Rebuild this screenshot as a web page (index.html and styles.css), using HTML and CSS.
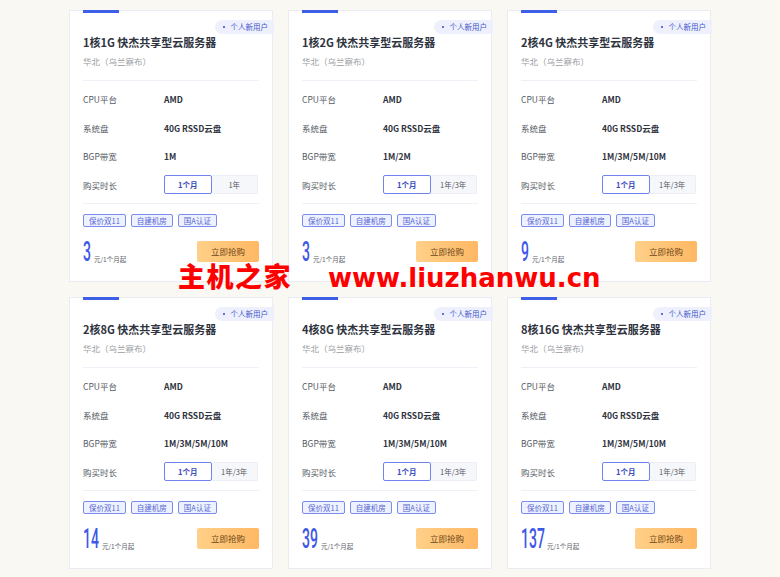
FILE: index.html
```html
<!DOCTYPE html>
<html lang="zh-CN">
<head>
<meta charset="utf-8">
<title>快杰共享型云服务器</title>
<link rel="stylesheet" href="styles.css">
</head>
<body>
<div class="grid">

  <div class="card">
    <div class="bar"></div>
    <span class="badge"><i class="dot"></i>个人新用户</span>
    <h3 class="title">1核1G 快杰共享型云服务器</h3>
    <p class="region">华北（乌兰察布）</p>
    <div class="line"></div>
    <div class="specs">
      <div class="row"><span class="lbl">CPU平台</span><span class="val">AMD</span></div>
      <div class="row"><span class="lbl">系统盘</span><span class="val">40G RSSD云盘</span></div>
      <div class="row"><span class="lbl">BGP带宽</span><span class="val">1M</span></div>
      <div class="row"><span class="lbl">购买时长</span><div class="seg"><span class="opt on">1个月</span><span class="opt">1年</span></div></div>
    </div>
    <div class="line line2"></div>
    <div class="tags"><span class="tag">保价双11</span><span class="tag">自建机房</span><span class="tag">国A认证</span></div>
    <div class="buy">
      <div class="price"><span class="num d1"><span class="digits">3</span></span><span class="unit">元/1个月起</span></div>
      <button class="btn">立即抢购</button>
    </div>
  </div>

  <div class="card">
    <div class="bar"></div>
    <span class="badge"><i class="dot"></i>个人新用户</span>
    <h3 class="title">1核2G 快杰共享型云服务器</h3>
    <p class="region">华北（乌兰察布）</p>
    <div class="line"></div>
    <div class="specs">
      <div class="row"><span class="lbl">CPU平台</span><span class="val">AMD</span></div>
      <div class="row"><span class="lbl">系统盘</span><span class="val">40G RSSD云盘</span></div>
      <div class="row"><span class="lbl">BGP带宽</span><span class="val">1M/2M</span></div>
      <div class="row"><span class="lbl">购买时长</span><div class="seg"><span class="opt on">1个月</span><span class="opt">1年/3年</span></div></div>
    </div>
    <div class="line line2"></div>
    <div class="tags"><span class="tag">保价双11</span><span class="tag">自建机房</span><span class="tag">国A认证</span></div>
    <div class="buy">
      <div class="price"><span class="num d1"><span class="digits">3</span></span><span class="unit">元/1个月起</span></div>
      <button class="btn">立即抢购</button>
    </div>
  </div>

  <div class="card">
    <div class="bar"></div>
    <span class="badge"><i class="dot"></i>个人新用户</span>
    <h3 class="title">2核4G 快杰共享型云服务器</h3>
    <p class="region">华北（乌兰察布）</p>
    <div class="line"></div>
    <div class="specs">
      <div class="row"><span class="lbl">CPU平台</span><span class="val">AMD</span></div>
      <div class="row"><span class="lbl">系统盘</span><span class="val">40G RSSD云盘</span></div>
      <div class="row"><span class="lbl">BGP带宽</span><span class="val">1M/3M/5M/10M</span></div>
      <div class="row"><span class="lbl">购买时长</span><div class="seg"><span class="opt on">1个月</span><span class="opt">1年/3年</span></div></div>
    </div>
    <div class="line line2"></div>
    <div class="tags"><span class="tag">保价双11</span><span class="tag">自建机房</span><span class="tag">国A认证</span></div>
    <div class="buy">
      <div class="price"><span class="num d1"><span class="digits">9</span></span><span class="unit">元/1个月起</span></div>
      <button class="btn">立即抢购</button>
    </div>
  </div>

  <div class="card">
    <div class="bar"></div>
    <span class="badge"><i class="dot"></i>个人新用户</span>
    <h3 class="title">2核8G 快杰共享型云服务器</h3>
    <p class="region">华北（乌兰察布）</p>
    <div class="line"></div>
    <div class="specs">
      <div class="row"><span class="lbl">CPU平台</span><span class="val">AMD</span></div>
      <div class="row"><span class="lbl">系统盘</span><span class="val">40G RSSD云盘</span></div>
      <div class="row"><span class="lbl">BGP带宽</span><span class="val">1M/3M/5M/10M</span></div>
      <div class="row"><span class="lbl">购买时长</span><div class="seg"><span class="opt on">1个月</span><span class="opt">1年/3年</span></div></div>
    </div>
    <div class="line line2"></div>
    <div class="tags"><span class="tag">保价双11</span><span class="tag">自建机房</span><span class="tag">国A认证</span></div>
    <div class="buy">
      <div class="price"><span class="num d2"><span class="digits">14</span></span><span class="unit">元/1个月起</span></div>
      <button class="btn">立即抢购</button>
    </div>
  </div>

  <div class="card">
    <div class="bar"></div>
    <span class="badge"><i class="dot"></i>个人新用户</span>
    <h3 class="title">4核8G 快杰共享型云服务器</h3>
    <p class="region">华北（乌兰察布）</p>
    <div class="line"></div>
    <div class="specs">
      <div class="row"><span class="lbl">CPU平台</span><span class="val">AMD</span></div>
      <div class="row"><span class="lbl">系统盘</span><span class="val">40G RSSD云盘</span></div>
      <div class="row"><span class="lbl">BGP带宽</span><span class="val">1M/3M/5M/10M</span></div>
      <div class="row"><span class="lbl">购买时长</span><div class="seg"><span class="opt on">1个月</span><span class="opt">1年/3年</span></div></div>
    </div>
    <div class="line line2"></div>
    <div class="tags"><span class="tag">保价双11</span><span class="tag">自建机房</span><span class="tag">国A认证</span></div>
    <div class="buy">
      <div class="price"><span class="num d2"><span class="digits">39</span></span><span class="unit">元/1个月起</span></div>
      <button class="btn">立即抢购</button>
    </div>
  </div>

  <div class="card">
    <div class="bar"></div>
    <span class="badge"><i class="dot"></i>个人新用户</span>
    <h3 class="title">8核16G 快杰共享型云服务器</h3>
    <p class="region">华北（乌兰察布）</p>
    <div class="line"></div>
    <div class="specs">
      <div class="row"><span class="lbl">CPU平台</span><span class="val">AMD</span></div>
      <div class="row"><span class="lbl">系统盘</span><span class="val">40G RSSD云盘</span></div>
      <div class="row"><span class="lbl">BGP带宽</span><span class="val">1M/3M/5M/10M</span></div>
      <div class="row"><span class="lbl">购买时长</span><div class="seg"><span class="opt on">1个月</span><span class="opt">1年/3年</span></div></div>
    </div>
    <div class="line line2"></div>
    <div class="tags"><span class="tag">保价双11</span><span class="tag">自建机房</span><span class="tag">国A认证</span></div>
    <div class="buy">
      <div class="price"><span class="num d3"><span class="digits">137</span></span><span class="unit">元/1个月起</span></div>
      <button class="btn">立即抢购</button>
    </div>
  </div>

</div>
<div class="watermark"><span class="wm-cn">主机之家</span><span class="wm-url">www.liuzhanwu.cn</span></div>
</body>
</html>
```

FILE: styles.css
```css
* { box-sizing: border-box; }

html, body {
  margin: 0;
  padding: 0;
}

body {
  background: #faf8f3;
  font-family: "Noto Sans CJK SC", "Noto Sans", sans-serif;
  color: #333;
  position: relative;
  height: 577px;
  overflow: hidden;
}

.grid {
  display: grid;
  grid-template-columns: repeat(3, 204px);
  column-gap: 15px;
  row-gap: 15px;
  justify-content: center;
  padding-top: 10px;
}

.card {
  position: relative;
  height: 272px;
  background: #fff;
  border: 1px solid #e9ecf4;
  padding: 0 13px 0 13px;
  display: flex;
  flex-direction: column;
}

.bar {
  width: 36px;
  height: 3px;
  margin-top: -1px;
  background: #3d5fe6;
  flex: none;
}

.badge {
  position: absolute;
  top: 9px;
  right: -2px;
  height: 14px;
  padding: 0 6px 0 8px;
  background: #eef1fd;
  border-radius: 7px 0 0 7px;
  font-size: 7.5px;
  line-height: 14px;
  color: #4056cc;
  display: flex;
  align-items: center;
}

.dot {
  width: 2px;
  height: 2px;
  background: #5d72dc;
  margin-right: 6px;
}

.title {
  margin: 21px 0 0;
  font-size: 11px;
  line-height: 16px;
  font-weight: 700;
  color: #2f3440;
  white-space: nowrap;
}

.region {
  margin: 5px 0 0;
  font-size: 8.5px;
  line-height: 12px;
  color: #9a9ca3;
}

.line {
  height: 1px;
  background: #edf0f6;
  margin-top: 13px;
  flex: none;
}

.line2 { margin-top: 3.5px; }

.specs {
  margin-top: 4px;
  display: flex;
  flex-direction: column;
}

.row {
  height: 28.5px;
  display: flex;
  align-items: center;
}

.lbl {
  width: 81px;
  font-size: 8.5px;
  color: #555a64;
}

.val {
  font-size: 8.5px;
  font-weight: 700;
  color: #2f3440;
}

.seg {
  display: flex;
  width: 94px;
  height: 19px;
}

.opt {
  flex: 1;
  display: flex;
  align-items: center;
  justify-content: center;
  font-size: 7.5px;
  color: #555a64;
  background: #f6f7fb;
  border: 1px solid #eceef5;
  border-left: none;
  border-radius: 0 2px 2px 0;
}

.opt.on {
  background: #fff;
  border: 1px solid #7184ee;
  border-radius: 2px;
  color: #3a4cc0;
  font-weight: 700;
}

.tags {
  margin-top: 10px;
  display: flex;
  gap: 5px;
}

.tag {
  height: 13px;
  padding: 0 5px;
  background: #eef1fe;
  border: 1px solid #7a8cf0;
  border-radius: 2px;
  font-size: 7.5px;
  line-height: 11px;
  color: #5467d6;
}

.buy {
  margin-top: 13px;
  display: flex;
  justify-content: space-between;
  align-items: flex-end;
  height: 23px;
}

.price {
  display: flex;
  align-items: flex-end;
}

.num {
  display: inline-block;
  height: 23px;
  position: relative;
}

.num.d1 { width: 10px; }
.num.d2 { width: 18px; }
.num.d3 { width: 25px; }

.digits {
  display: inline-block;
  font-family: Roboto, "Noto Sans", sans-serif;
  font-weight: 500;
  font-size: 28px;
  line-height: 23px;
  color: #3f58e8;
  transform: scaleX(0.5);
  transform-origin: left bottom;
  white-space: nowrap;
}

.unit {
  margin-left: 1px;
  font-size: 6.5px;
  line-height: 8px;
  color: #60646d;
}

.btn {
  width: 62px;
  height: 21px;
  margin-bottom: 1px;
  border: none;
  border-radius: 2px;
  background: linear-gradient(90deg, #ffd089 0%, #ffb864 100%);
  font-family: "Noto Sans CJK SC", sans-serif;
  font-size: 8.5px;
  color: #6a4718;
  padding: 0;
}

.watermark {
  position: absolute;
  top: 261px;
  left: 178px;
  display: flex;
  align-items: baseline;
  color: #ff0000;
  white-space: nowrap;
}

.wm-cn {
  font-family: "Noto Sans CJK SC", sans-serif;
  font-weight: 900;
  font-size: 27px;
  line-height: 30px;
  letter-spacing: 1.5px;
}

.wm-url {
  margin-left: 36px;
  font-family: "DejaVu Sans", sans-serif;
  font-weight: 700;
  font-size: 26px;
  line-height: 30px;
}
```
